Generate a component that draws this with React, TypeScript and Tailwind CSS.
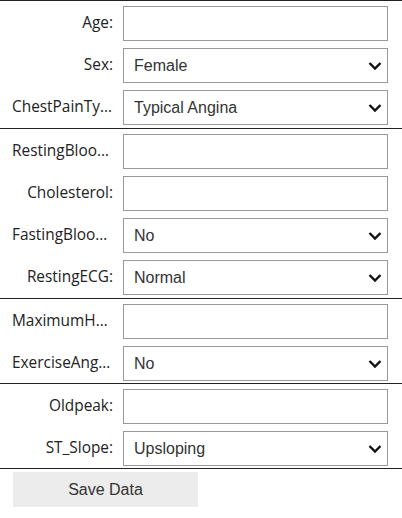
import React from 'react';

type Field =
  | { id: string; label: string; kind: 'input' }
  | { id: string; label: string; kind: 'select'; value: string };

const sections: Field[][] = [
  [
    { id: 'age', label: 'Age:', kind: 'input' },
    { id: 'sex', label: 'Sex:', kind: 'select', value: 'Female' },
    { id: 'cp', label: 'ChestPainType:', kind: 'select', value: 'Typical Angina' },
  ],
  [
    { id: 'bp', label: 'RestingBloodPressure:', kind: 'input' },
    { id: 'chol', label: 'Cholesterol:', kind: 'input' },
    { id: 'fbs', label: 'FastingBloodSugar:', kind: 'select', value: 'No' },
    { id: 'ecg', label: 'RestingECG:', kind: 'select', value: 'Normal' },
  ],
  [
    { id: 'hr', label: 'MaximumHeartRate:', kind: 'input' },
    { id: 'ex', label: 'ExerciseAngina:', kind: 'select', value: 'No' },
  ],
  [
    { id: 'op', label: 'Oldpeak:', kind: 'input' },
    { id: 'st', label: 'ST_Slope:', kind: 'select', value: 'Upsloping' },
  ],
];

function Chevron() {
  return (
    <svg
      width="14"
      height="9"
      viewBox="0 0 14 9"
      className="pointer-events-none absolute right-[6px] top-1/2 -translate-y-1/2"
    >
      <polyline points="1.5,1.5 7,7 12.5,1.5" fill="none" stroke="#111" strokeWidth="2.4" />
    </svg>
  );
}

function Row({ field }: { field: Field }) {
  return (
    <div className="flex h-[42px] items-start pt-[5px]">
      <label
        htmlFor={field.id}
        className="ml-[12px] w-[101px] truncate pt-[6px] text-right text-[15.4px] leading-[22px] text-[#222] [font-family:'Segoe_UI','Open_Sans',sans-serif]"
      >
        {field.label}
      </label>
      <div className="relative ml-[10px] h-[35px] w-[265px]">
        {field.kind === 'input' ? (
          <input
            id={field.id}
            type="text"
            className="h-full w-full border border-[#999] bg-white px-[10px] text-[16px] text-[#333] outline-none [font-family:'Liberation_Sans',Arial,sans-serif]"
          />
        ) : (
          <>
            <select
              id={field.id}
              defaultValue={field.value}
              className="h-full w-full appearance-none border border-[#999] bg-white px-[10px] text-[16px] text-[#333] outline-none [font-family:'Liberation_Sans',Arial,sans-serif]"
            >
              <option>{field.value}</option>
            </select>
            <Chevron />
          </>
        )}
      </div>
    </div>
  );
}

export default function App() {
  return (
    <div className="w-[402px] bg-white">
      {sections.map((section, i) => (
        <div key={i} className={i < 2 ? 'border-t border-[#222] pb-px' : 'border-t border-[#222]'}>
          {section.map((field) => (
            <Row key={field.id} field={field} />
          ))}
        </div>
      ))}
      <div className="border-t border-[#222] pt-[3px]">
        <button
          type="button"
          className="ml-[13px] h-[35px] w-[185px] bg-[#ececec] text-[16px] text-[#333] [font-family:'Liberation_Sans',Arial,sans-serif]"
        >
          Save Data
        </button>
      </div>
    </div>
  );
}
